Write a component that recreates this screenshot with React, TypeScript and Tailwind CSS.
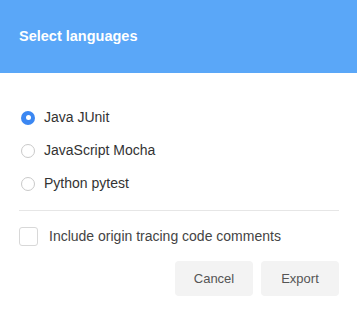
import React, { useState } from "react";

const languages = ["Java JUnit", "JavaScript Mocha", "Python pytest"];

export default function App() {
  const [selected, setSelected] = useState(0);
  const [comments, setComments] = useState(false);

  return (
    <div className="w-[357px] h-[312px] bg-white font-['Liberation_Sans',Arial,sans-serif]">
      {/* Header */}
      <div className="h-[73px] bg-[#5aa7f8] flex items-center px-[19px]">
        <h1 className="text-white font-bold text-[14.5px]">Select languages</h1>
      </div>

      <div className="pl-[19px] pr-[18px] pt-[28px]">
        {/* Language options */}
        {languages.map((lang, idx) => {
          const isOn = selected === idx;
          return (
            <label
              key={lang}
              onClick={() => setSelected(idx)}
              className="h-[33px] flex items-center gap-[9px] cursor-pointer"
            >
              <span
                className={`w-[14px] h-[14px] ml-[2px] rounded-full flex items-center justify-center ${
                  isOn ? "bg-[#3b87f2]" : "border border-[#c9c9c9] bg-white"
                }`}
              >
                {isOn && <span className="w-[5px] h-[5px] rounded-full bg-white" />}
              </span>
              <span className="text-[14px] text-[#333]">{lang}</span>
            </label>
          );
        })}

        <div className="mt-[10px] border-t border-[#e6e6e6]" />

        {/* Comments checkbox */}
        <label
          onClick={() => setComments(!comments)}
          className="mt-[16px] h-[19px] flex items-center gap-[11px] cursor-pointer"
        >
          <span className="w-[19px] h-[19px] rounded-[3px] border border-[#d8d8d8] bg-white" />
          <span className="text-[14px] text-[#444]">Include origin tracing code comments</span>
        </label>

        {/* Actions */}
        <div className="mt-[15px] flex justify-end gap-[8px]">
          <button className="w-[78px] h-[35px] rounded-[4px] bg-[#f3f3f3] text-[13px] text-[#555]">
            Cancel
          </button>
          <button className="w-[78px] h-[35px] rounded-[4px] bg-[#f3f3f3] text-[13px] text-[#555]">
            Export
          </button>
        </div>
      </div>
    </div>
  );
}
